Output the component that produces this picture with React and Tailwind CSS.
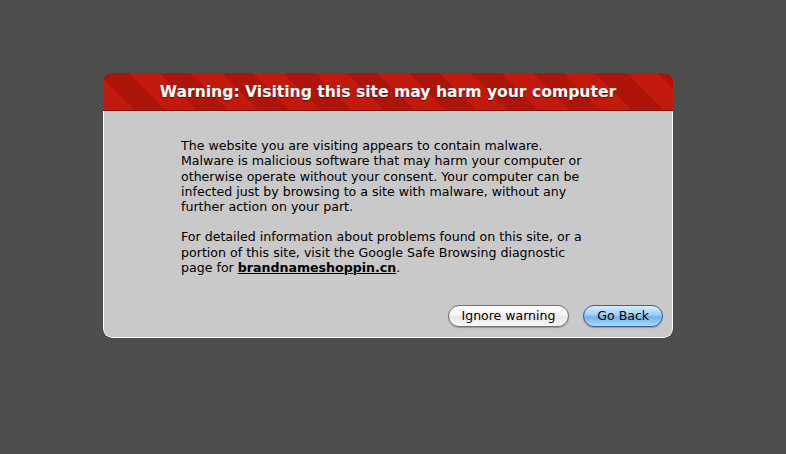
import React from 'react';

const font = { fontFamily: '"DejaVu Sans", Verdana, sans-serif' };

function AquaButton({ children, primary }) {
  return (
    <button
      className={
        primary
          ? 'h-[22px] px-[13px] rounded-full border border-[#3a5f9e] text-[12.5px] leading-none text-black bg-[linear-gradient(#d8ecff_0%,#9ccdfb_45%,#70b2f4_55%,#a9dcff_100%)] shadow-[0_1px_1px_rgba(0,0,0,0.25)]'
          : 'h-[22px] px-[13px] rounded-full border border-[#6f6f6f] text-[12.5px] leading-none text-black bg-[linear-gradient(#ffffff_0%,#f4f4f4_45%,#e6e6e6_55%,#fafafa_100%)] shadow-[0_1px_1px_rgba(0,0,0,0.25)]'
      }
    >
      {children}
    </button>
  );
}

export default function App() {
  return (
    <div className="min-h-screen w-full bg-[#4d4d4d] pt-[73px] pl-[103px]" style={font}>
      <div className="w-[570px] rounded-[9px] overflow-hidden">
        {/* red title bar */}
        <div className="h-[38px] pt-[3px] flex items-center justify-center border-b border-[#8e1008] bg-[repeating-linear-gradient(45deg,#c3180c_0px,#c3180c_22px,#ad150a_22px,#ad150a_44px)]">
          <h1 className="text-[15.6px] font-bold text-white [text-shadow:0_1px_1px_rgba(0,0,0,0.45)]">
            Warning: Visiting this site may harm your computer
          </h1>
        </div>

        {/* body */}
        <div className="bg-[#c9c9c9] border-x border-b border-white rounded-b-[9px] pt-[27px] pb-[10px] pr-[9px]">
          <div className="pl-[77px] text-[12.6px] leading-[15.3px] text-black whitespace-nowrap">
            <p>
              The website you are visiting appears to contain malware.<br />
              Malware is malicious software that may harm your computer or<br />
              otherwise operate without your consent. Your computer can be<br />
              infected just by browsing to a site with malware, without any<br />
              further action on your part.
            </p>
            <p className="mt-[15px]">
              For detailed information about problems found on this site, or a<br />
              portion of this site, visit the Google Safe Browsing diagnostic<br />
              page for <a className="font-bold underline text-black">brandnameshoppin.cn</a>.
            </p>
          </div>

          <div className="mt-[30px] flex justify-end gap-[14px]">
            <AquaButton>Ignore warning</AquaButton>
            <AquaButton primary>Go Back</AquaButton>
          </div>
        </div>
      </div>
    </div>
  );
}
